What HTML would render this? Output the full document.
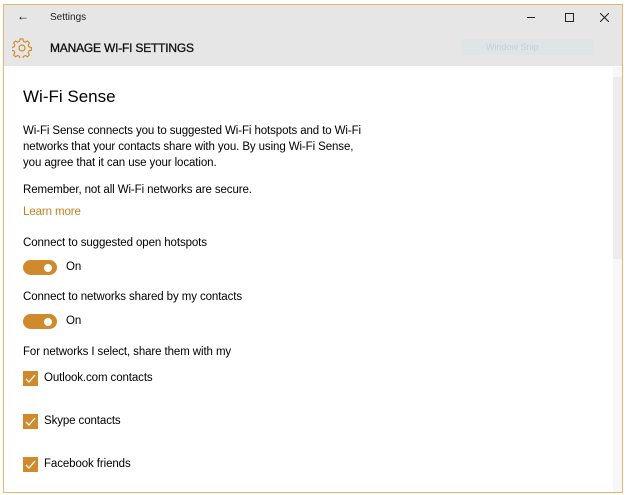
<!DOCTYPE html>
<html><head><style>
*{margin:0;padding:0;box-sizing:border-box}
body{width:629px;height:495px;background:#fff;position:relative;font-family:"Liberation Sans",sans-serif;color:#000;overflow:hidden}
.win{position:absolute;left:3px;top:4px;width:620px;height:489px;border:1px solid #e9b46e;background:#fff}
.hdr{position:absolute;left:0;top:0;width:618px;height:61px;background:#e6e6e6}
.t{position:absolute;white-space:nowrap}
.p{font-size:11.5px;left:19px;letter-spacing:-0.1px}
.tog{position:absolute;left:19px;width:34px;height:15px;border-radius:8px;background:#d08a2c}
.tog:after{content:"";position:absolute;right:5px;top:3.5px;width:8px;height:8px;border-radius:50%;background:#fff}
.cb{position:absolute;left:19px;width:15px;height:15px;background:#d08a2c}
.cb svg{position:absolute;left:0;top:0}
</style></head><body>
<div class="win">
<div class="hdr">
<div class="t" style="left:13px;top:4px;font-size:12px">←</div>
<div class="t" style="left:46px;top:7px;font-size:10px;color:#222">Settings</div>
<div style="position:absolute;left:523px;top:12px;width:8px;height:1px;background:#222"></div>
<div style="position:absolute;left:561px;top:8px;width:9px;height:9px;border:1px solid #222"></div>
<svg style="position:absolute;left:596px;top:8px" width="9" height="9"><path d="M0 0L9 9M9 0L0 9" stroke="#222" stroke-width="1"/></svg>
<svg style="position:absolute;left:8px;top:33px" width="20" height="20" viewBox="0 0 20 20"><g fill="none" stroke="#d08a2c" stroke-width="1.2"><circle cx="10" cy="10" r="3"/><path d="M8.5 1.5h3l.5 2.5 2 1 2.3-1.3 2 2-1.3 2.3 1 2 2.5.5v3l-2.5.5-1 2 1.3 2.3-2 2-2.3-1.3-2 1-.5 2.5h-3l-.5-2.5-2-1-2.3 1.3-2-2 1.3-2.3-1-2-2.5-.5v-3l2.5-.5 1-2-1.3-2.3 2-2 2.3 1.3 2-1z" transform="translate(0,-.5) scale(.95)"/></g></svg>
<div class="t" style="left:46px;top:36px;font-size:12px;color:#111;letter-spacing:-0.2px;-webkit-text-stroke:0.3px #111">MANAGE WI-FI SETTINGS</div>
<div style="position:absolute;left:457px;top:34px;width:133px;height:16px;background:#dfe4e6"></div>
<div class="t" style="left:482px;top:37px;font-size:9px;color:#ccd">Window Snip</div>
</div>
<div style="position:absolute;left:609px;top:62px;width:9px;height:425px;background:#f7f7f7"></div>
<div style="position:absolute;left:609px;top:72px;width:9px;height:182px;background:#ececec"></div>
<div class="t" style="left:19px;top:82px;font-size:17px">Wi-Fi Sense</div>
<div class="t p" style="top:118px;line-height:16px">Wi-Fi Sense connects you to suggested Wi-Fi hotspots and to Wi-Fi<br>networks that your contacts share with you. By using Wi-Fi Sense,<br>you agree that it can use your location.</div>
<div class="t p" style="top:179px">Remember, not all Wi-Fi networks are secure.</div>
<div class="t p" style="top:201px;color:#c57e1e">Learn more</div>
<div class="t p" style="top:232px">Connect to suggested open hotspots</div>
<div class="tog" style="top:255px"></div><div class="t p" style="left:62px;top:256px">On</div>
<div class="t p" style="top:286px">Connect to networks shared by my contacts</div>
<div class="tog" style="top:309px"></div><div class="t p" style="left:62px;top:310px">On</div>
<div class="t p" style="top:341px">For networks I select, share them with my</div>
<div class="cb" style="top:366px"><svg width="15" height="15"><path d="M3 8l3 3 6-7" fill="none" stroke="#fff" stroke-width="1.3"/></svg></div>
<div class="t p" style="left:40px;top:367px">Outlook.com contacts</div>
<div class="cb" style="top:409px"><svg width="15" height="15"><path d="M3 8l3 3 6-7" fill="none" stroke="#fff" stroke-width="1.3"/></svg></div>
<div class="t p" style="left:40px;top:410px">Skype contacts</div>
<div class="cb" style="top:452px"><svg width="15" height="15"><path d="M3 8l3 3 6-7" fill="none" stroke="#fff" stroke-width="1.3"/></svg></div>
<div class="t p" style="left:40px;top:453px">Facebook friends</div>
</div>
</body></html>
